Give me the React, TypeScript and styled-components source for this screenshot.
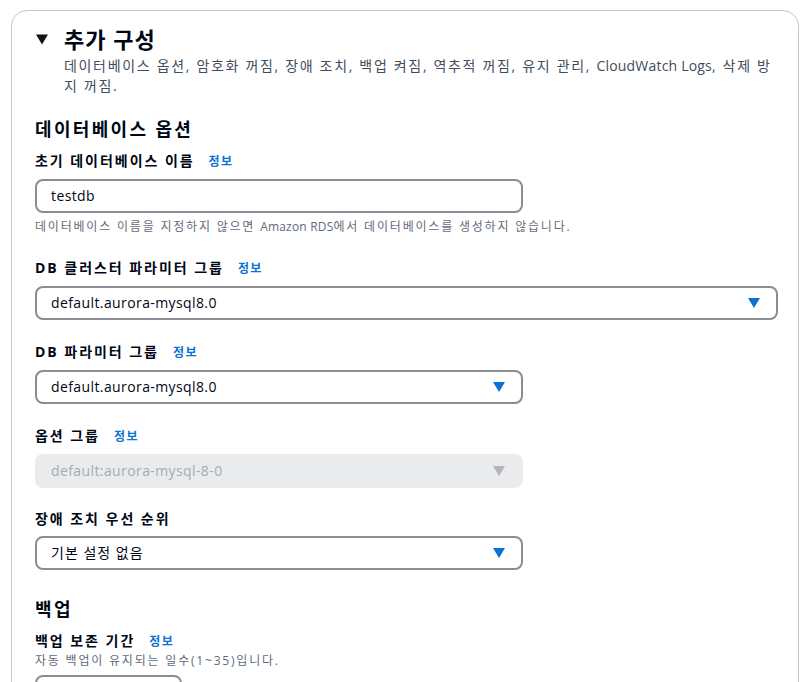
import React from "react";
import styled, { createGlobalStyle } from "styled-components";

const GlobalStyle = createGlobalStyle`
  html, body { margin: 0; padding: 0; background: #ffffff; }
  body {
    font-family: "Open Sans", "Noto Sans CJK KR", sans-serif;
    color: #000716;
    -webkit-font-smoothing: antialiased;
  }
  * { box-sizing: border-box; }
`;

const Page = styled.div`
  padding: 10px 10px 0 11px;
  height: 682px;
  overflow: hidden;
`;

const Card = styled.section`
  border: 1px solid #c6c6cd;
  border-radius: 16px;
  padding: 12px 21px 40px 23px;
  min-height: 720px;
`;

const Header = styled.div`
  display: grid;
  grid-template-columns: 29px 1fr;
  align-items: start;
`;

const Caret = styled.span`
  display: flex;
  align-items: center;
  height: 32px;
  padding-left: 1px;
`;

const Title = styled.h2`
  margin: 0;
  font-size: 22px;
  line-height: 32px;
  font-weight: 700;
  letter-spacing: 1px;
  color: #000716;
`;

const Description = styled.p`
  grid-column: 2;
  margin: 1px 0 0 0;
  font-size: 14px;
  line-height: 20px;
  letter-spacing: 0.12em;
  word-break: break-all;
  color: #414d5c;
`;

const Latin = styled.span`
  letter-spacing: 0.2px;
`;

const SectionTitle = styled.h3<{ $top: number }>`
  margin: ${(p) => p.$top}px 0 0 0;
  font-size: 18px;
  line-height: 24px;
  font-weight: 700;
  letter-spacing: 0.13em;
  color: #000716;
`;

const Field = styled.div<{ $top: number }>`
  display: flex;
  flex-direction: column;
  margin-top: ${(p) => p.$top}px;
`;

const LabelRow = styled.div`
  display: flex;
  align-items: baseline;
  gap: 14px;
  font-size: 14px;
  line-height: 22px;
`;

const Label = styled.span`
  font-weight: 700;
  letter-spacing: 0.14em;
  color: #000716;
`;

const InfoLink = styled.a`
  font-size: 12px;
  font-weight: 700;
  letter-spacing: 0.12em;
  color: #0972d3;
  text-decoration: none;
`;

const Help = styled.div<{ $below?: boolean }>`
  font-size: 12px;
  line-height: 16px;
  letter-spacing: 0.15em;
  color: #5f6b7a;
  margin-top: ${(p) => (p.$below ? "6px" : "0")};
`;

const Control = styled.div<{ $width: number; $disabled?: boolean; $gap?: number }>`
  margin-top: ${(p) => p.$gap ?? 6}px;
  width: ${(p) => p.$width}px;
  height: 34px;
  display: flex;
  align-items: center;
  justify-content: space-between;
  padding: 0 16px 0 14px;
  border-radius: 8px;
  border: 2px solid ${(p) => (p.$disabled ? "#e9ebed" : "#8c8c94")};
  background: ${(p) => (p.$disabled ? "#e9ebed" : "#ffffff")};
  color: ${(p) => (p.$disabled ? "#a4abb5" : "#000716")};
  font-size: 14px;
  line-height: 20px;
`;

const Value = styled.span<{ $ko?: boolean }>`
  white-space: nowrap;
  letter-spacing: ${(p) => (p.$ko ? "1px" : "0.4px")};
`;

const Triangle = ({ color, w = 12, h = 10 }: { color: string; w?: number; h?: number }) => (
  <svg width={w} height={h} viewBox="0 0 12 10" aria-hidden="true">
    <path d="M0 0 H12 L6 10 Z" fill={color} />
  </svg>
);

type SelectProps = { value: string; width: number; disabled?: boolean; ko?: boolean };

const Select = ({ value, width, disabled, ko }: SelectProps) => (
  <Control $width={width} $disabled={disabled}>
    <Value $ko={ko}>{value}</Value>
    <Triangle color={disabled ? "#b4b4bb" : "#0972d3"} />
  </Control>
);

export default function App() {
  return (
    <>
      <GlobalStyle />
      <Page>
        <Card>
          <Header>
            <Caret>
              <Triangle color="#0f141a" w={12} h={11} />
            </Caret>
            <Title>추가 구성</Title>
            <Description>
              데이터베이스 옵션, 암호화 꺼짐, 장애 조치, 백업 켜짐, 역추적 꺼짐, 유지 관리, <Latin>CloudWatch Logs</Latin>, 삭제 방지 꺼짐.
            </Description>
          </Header>

          <SectionTitle $top={21}>데이터베이스 옵션</SectionTitle>

          <Field $top={9}>
            <LabelRow>
              <Label>초기 데이터베이스 이름</Label>
              <InfoLink href="#">정보</InfoLink>
            </LabelRow>
            <Control $width={488} $gap={6}>
              <Value>testdb</Value>
            </Control>
            <Help $below>
              데이터베이스 이름을 지정하지 않으면 <Latin>Amazon RDS</Latin>에서 데이터베이스를 생성하지 않습니다.
            </Help>
          </Field>

          <Field $top={22}>
            <LabelRow>
              <Label>DB 클러스터 파라미터 그룹</Label>
              <InfoLink href="#">정보</InfoLink>
            </LabelRow>
            <Select value="default.aurora-mysql8.0" width={743} />
          </Field>

          <Field $top={21}>
            <LabelRow>
              <Label>DB 파라미터 그룹</Label>
              <InfoLink href="#">정보</InfoLink>
            </LabelRow>
            <Select value="default.aurora-mysql8.0" width={488} />
          </Field>

          <Field $top={21}>
            <LabelRow>
              <Label>옵션 그룹</Label>
              <InfoLink href="#">정보</InfoLink>
            </LabelRow>
            <Select value="default:aurora-mysql-8-0" width={488} disabled />
          </Field>

          <Field $top={20}>
            <LabelRow>
              <Label>장애 조치 우선 순위</Label>
            </LabelRow>
            <Select value="기본 설정 없음" width={488} ko />
          </Field>

          <SectionTitle $top={27}>백업</SectionTitle>

          <Field $top={9}>
            <LabelRow>
              <Label>백업 보존 기간</Label>
              <InfoLink href="#">정보</InfoLink>
            </LabelRow>
            <Help>자동 백업이 유지되는 일수(1~35)입니다.</Help>
            <Control $width={147} $gap={6} />
          </Field>
        </Card>
      </Page>
    </>
  );
}
